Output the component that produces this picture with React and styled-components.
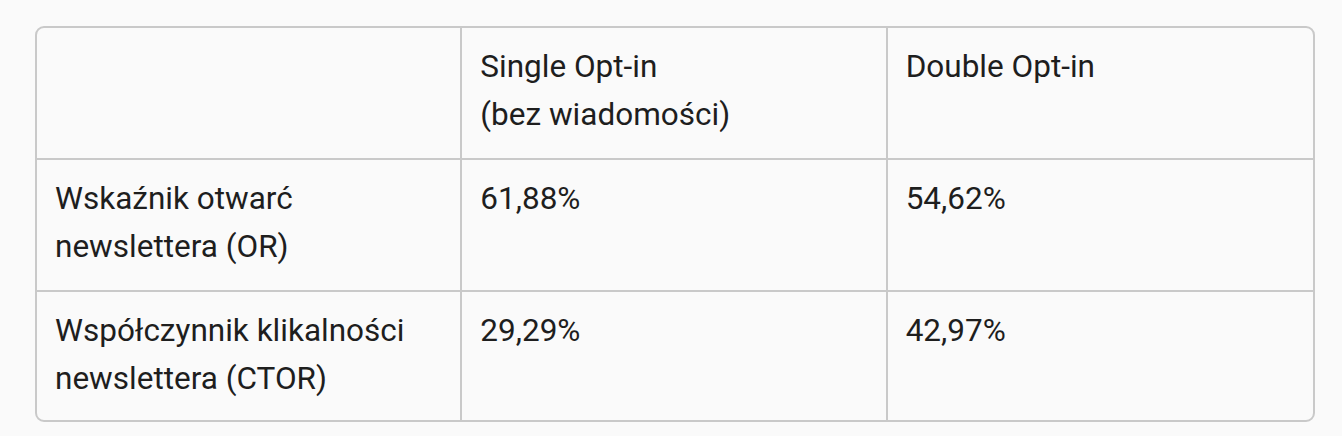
import styled, { createGlobalStyle } from "styled-components";

const GlobalStyle = createGlobalStyle`
  body {
    margin: 0;
    background: #fafafa;
    font-family: Roboto, "Noto Sans", sans-serif;
  }
`;

const rows = [
  {
    label: ["Wskaźnik otwarć", "newslettera (OR)"],
    single: "61,88%",
    double: "54,62%",
  },
  {
    label: ["Współczynnik klikalności", "newslettera (CTOR)"],
    single: "29,29%",
    double: "42,97%",
  },
];

const App = () => {
  return (
    <>
      <GlobalStyle />
      <Page>
        <Table>
          <thead>
            <tr>
              <Cell as="th"></Cell>
              <Cell as="th">
                Single Opt-in
                <br />
                (bez wiadomości)
              </Cell>
              <Cell as="th" $last>
                Double Opt-in
              </Cell>
            </tr>
          </thead>
          <tbody>
            {rows.map((row, i) => {
              const bottom = i === rows.length - 1;
              return (
                <tr key={i}>
                  <Cell $bottom={bottom}>
                    {row.label[0]}
                    <br />
                    {row.label[1]}
                  </Cell>
                  <Cell $bottom={bottom}>{row.single}</Cell>
                  <Cell $bottom={bottom} $last>
                    {row.double}
                  </Cell>
                </tr>
              );
            })}
          </tbody>
        </Table>
      </Page>
    </>
  );
};

const Page = styled.div`
  padding: 26px 30px 16px 35px;
`;

const Table = styled.table`
  width: 1280px;
  table-layout: fixed;
  border-collapse: separate;
  border-spacing: 0;
  border: 2px solid #c9c9c9;
  border-radius: 9px;
  overflow: hidden;
  background: #fafafa;
`;

const Cell = styled.td`
  text-align: left;
  vertical-align: top;
  font-weight: 400;
  font-size: 31.5px;
  line-height: 48px;
  color: #1e1e1e;
  padding: 15px 18px ${(p) => (p.$bottom ? "17px" : "19px")};
  border-right: ${(p) => (p.$last ? "none" : "2px solid #c9c9c9")};
  border-bottom: ${(p) => (p.$bottom ? "none" : "2px solid #c9c9c9")};
`;

export default App;
